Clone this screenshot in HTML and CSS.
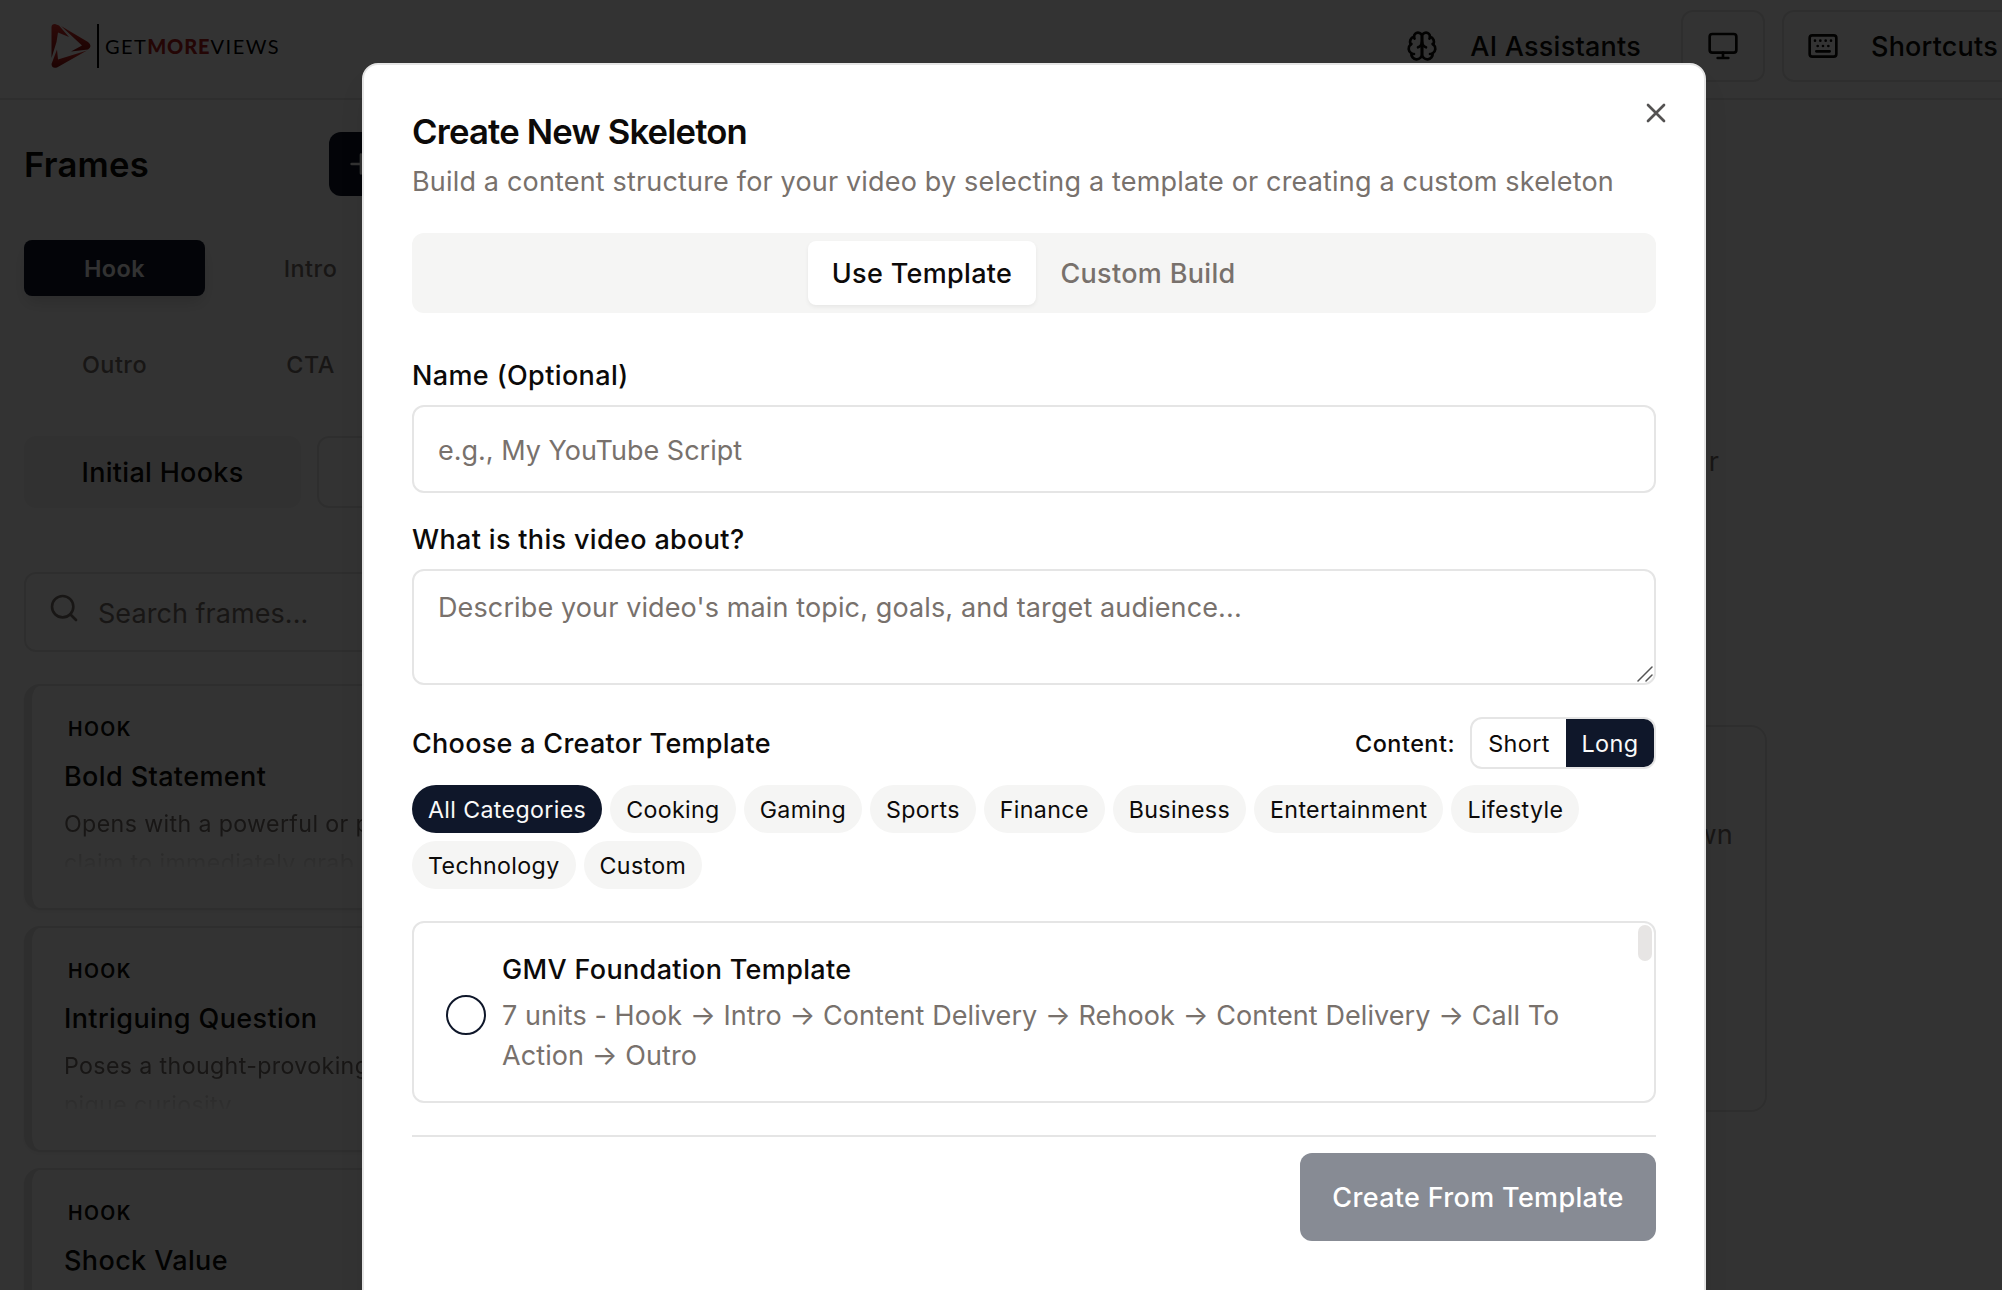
FILE: index.html
```html
<!DOCTYPE html>
<html lang="en">
<head>
<meta charset="utf-8">
<title>GetMoreViews</title>
<link rel="stylesheet" href="styles.css">
</head>
<body>
<div class="app">
  <header class="topbar">
    <div class="logo">
      <svg class="logo-mark" width="40" height="46" viewBox="0 0 40 46">
        <defs><linearGradient id="lg" x1="0" y1="0" x2="0" y2="1"><stop offset="0" stop-color="#e0352f"/><stop offset="1" stop-color="#8c0f0c"/></linearGradient></defs>
        <path fill="url(#lg)" d="M.5 35V4Q.5 1 4 1L8 2.500 18 14 7 9.500 5.500 19Z"/>
        <path fill="url(#lg)" d="M10 3 37 19Q42 23 37 26.500L20 28.500 31 22.500Z"/>
        <path fill="url(#lg)" d="M.5 41 6 26.500 7 36.500 36 27.500 6 44.500Q1 46 .5 41Z"/>
      </svg>
      <span class="logo-bar"></span>
      <span class="logo-text"><span class="logo-get">GET</span><b class="logo-more">MORE</b><span class="logo-views">VIEWS</span></span>
    </div>
    <nav class="actions">
      <button class="action action-ghost">
        <svg class="icon" viewBox="0 0 24 24"><path d="M12 5a3 3 0 1 0-5.997.125 4 4 0 0 0-2.526 5.770 4 4 0 0 0 .556 6.588A4 4 0 1 0 12 18Z"/><path d="M12 5a3 3 0 1 1 5.997.125 4 4 0 0 1 2.526 5.770 4 4 0 0 1-.556 6.588A4 4 0 1 1 12 18Z"/><path d="M15 13a4.500 4.500 0 0 1-3-4 4.500 4.500 0 0 1-3 4"/><path d="M17.599 6.500a3 3 0 0 0 .399-1.375"/><path d="M6.003 5.125A3 3 0 0 0 6.401 6.500"/><path d="M3.477 10.896a4 4 0 0 1 .585-.396"/><path d="M19.938 10.500a4 4 0 0 1 .585.396"/><path d="M6 18a4 4 0 0 1-1.967-.516"/><path d="M19.967 17.484A4 4 0 0 1 18 18"/></svg>
        <span class="label-ai">AI Assistants</span>
      </button>
      <button class="action action-square">
        <svg class="icon" viewBox="0 0 24 24"><rect width="20" height="14" x="2" y="3" rx="2"/><path d="M8 21h8M12 17v4"/></svg>
      </button>
      <button class="action action-keys">
        <svg class="icon" viewBox="0 0 24 24"><rect width="20" height="16" x="2" y="4" rx="2"/><path d="M10 8h.01M12 12h.01M14 8h.01M16 12h.01M18 8h.01M6 8h.01M7 16h10M8 12h.01"/></svg>
        <span class="label-keys">Shortcuts</span>
      </button>
    </nav>
  </header>
  <div class="workspace">
    <aside class="sidebar">
      <div class="side-head">
        <h2>Frames</h2>
        <button class="add"><svg class="icon" viewBox="0 0 24 24"><path d="M5 12h14M12 5v14"/></svg></button>
      </div>
      <div class="frame-tabs">
        <span class="frame-tab active">Hook</span><span class="frame-tab">Intro</span>
        <span class="frame-tab">Outro</span><span class="frame-tab">CTA</span>
      </div>
      <div class="groups"><span class="group selected">Initial Hooks</span><span class="group"></span></div>
      <div class="search">
        <svg class="icon" viewBox="0 0 24 24"><circle cx="11" cy="11" r="8"/><path d="m21 21-4.300-4.300"/></svg>
        <span>Search frames...</span>
      </div>
      <div class="cards">
        <article class="card"><div class="tag">HOOK</div><h3>Bold Statement</h3><p>Opens with a powerful or p<br>claim to immediately grab</p></article>
        <article class="card"><div class="tag">HOOK</div><h3>Intriguing Question</h3><p>Poses a thought-provoking<br>pique curiosity.</p></article>
        <article class="card"><div class="tag">HOOK</div><h3>Shock Value</h3></article>
      </div>
    </aside>
    <main class="canvas">
      <p class="lead">r</p>
      <section class="panel"><p>wn</p></section>
    </main>
  </div>
</div>
<div class="overlay"></div>
<div class="dialog" role="dialog">
  <svg class="icon close" viewBox="0 0 24 24"><path d="M18 6 6 18M6 6l12 12"/></svg>
  <h1>Create New Skeleton</h1>
  <p class="subtitle">Build a content structure for your video by selecting a template or creating a custom skeleton</p>
  <div class="tabs"><button class="tab on">Use Template</button><button class="tab">Custom Build</button></div>
  <label class="field-label">Name (Optional)</label>
  <input class="field" placeholder="e.g., My YouTube Script">
  <label class="field-label second">What is this video about?</label>
  <div class="area-wrap">
    <textarea class="field area" placeholder="Describe your video's main topic, goals, and target audience..."></textarea>
    <svg class="grip" width="16" height="16" viewBox="0 0 16 16"><path d="M1 15 15 1M9 15l6-6"/></svg>
  </div>
  <div class="choose">
    <span class="choose-title">Choose a Creator Template</span>
    <div class="length"><span class="length-label">Content:</span><div class="toggle"><button class="short">Short</button><button class="long">Long</button></div></div>
  </div>
  <div class="chips">
    <span class="chip on">All Categories</span><span class="chip">Cooking</span><span class="chip">Gaming</span><span class="chip">Sports</span><span class="chip">Finance</span><span class="chip">Business</span><span class="chip">Entertainment</span><span class="chip">Lifestyle</span><span class="chip">Technology</span><span class="chip">Custom</span>
  </div>
  <div class="templates">
    <span class="radio"></span>
    <div class="template">
      <div class="template-name">GMV Foundation Template</div>
      <div class="template-flow">7 units - Hook → Intro → Content Delivery → Rehook → Content Delivery → Call To<br>Action → Outro</div>
    </div>
    <span class="thumb"></span>
  </div>
  <div class="footer"><button class="create">Create From Template</button></div>
</div>
</body>
</html>
```
FILE: styles.css
```css
* { box-sizing: border-box; }
html, body { margin: 0; height: 1290px; overflow: hidden; }
body {
  position: relative;
  width: 2002px;
  background: #fff;
  color: #0c0a09;
  font-family: Inter, "Liberation Sans", sans-serif;
  font-size: 27px;
  letter-spacing: .2px;
}
h1, h2, h3, p { margin: 0; }
button { font: inherit; letter-spacing: inherit; color: inherit; border: 0; background: none; padding: 0; margin: 0; }
.icon { width: 32px; height: 32px; flex: none; fill: none; stroke: currentColor; stroke-width: 2; stroke-linecap: round; stroke-linejoin: round; }

/* top bar */
.app { height: 1290px; overflow: hidden; }
.topbar { display: flex; justify-content: space-between; height: 100px; border-bottom: 2px solid #e5e5e5; overflow: hidden; }
.logo { display: flex; align-items: center; height: 92px; padding-left: 51px; }
.logo-bar { width: 2px; height: 44px; margin: 0 6px; background: #000; }
.logo-text { display: flex; margin-top: -1px; font: 400 20px/24px Lato, sans-serif; color: #000; }
.logo-get { letter-spacing: 1.4px; }
.logo-more { letter-spacing: .9px; font-weight: 900; color: #b5201b; }
.logo-views { letter-spacing: 1.5px; }
.actions { display: flex; align-items: flex-start; padding-top: 10px; gap: 17px; margin-right: -24px; font-weight: 500; }
.action { display: flex; align-items: center; height: 72px; border: 2px solid #e5e5e5; border-radius: 12px; white-space: nowrap; }
.action-ghost { gap: 32px; padding: 0 21px 0 24px; border-color: transparent; letter-spacing: .24px; }
.action-square { width: 84px; justify-content: center; }
.action-keys { gap: 32px; width: 244px; padding-left: 23px; }

/* sidebar */
.workspace { display: flex; height: 1190px; }
.sidebar { width: 420px; flex: none; padding: 32px 0 0 24px; overflow: hidden; }
.side-head { display: flex; justify-content: space-between; align-items: center; height: 64px; }
h2 { font-size: 34.7px; font-weight: 600; letter-spacing: .2px; }
.add { display: flex; align-items: center; width: 91px; height: 64px; padding-left: 16px; border-radius: 12px; background: #0f172a; color: #fafaf9; }
.frame-tabs { display: grid; grid-template-columns: 181px 181px; grid-auto-rows: 56px; gap: 40px 15px; margin-top: 44px; }
.frame-tab { display: flex; align-items: center; justify-content: center; padding-top: 1px; border-radius: 8px; font-size: 23.4px; font-weight: 500; letter-spacing: .5px; color: #78716c; }
.frame-tab.active { background: #0f172a; color: #fafaf9; font-weight: 600; box-shadow: 0 8px 16px -2px rgba(0,0,0,.15); }
.groups { display: flex; gap: 16px; margin-top: 44px; }
.group { display: flex; align-items: center; justify-content: center; width: 277px; height: 72px; flex: none; border: 2px solid #e5e5e5; border-radius: 12px; font-weight: 500; letter-spacing: .3px; }
.group.selected { background: #f5f5f4; border-color: #f5f5f4; }
.search { display: flex; gap: 18px; height: 80px; margin-top: 64px; padding: 20px 0 0 22px; border: 2px solid #e5e5e5; border-radius: 12px; color: #78716c; line-height: 40px; letter-spacing: .05px; }
.search .icon { margin-top: -2px; }
.cards { display: flex; flex-direction: column; gap: 16px; margin-top: 32px; }
.card { height: 226px; padding: 30px 0 0 32px; border: 2px solid #e5e5e5; border-left-width: 8px; border-radius: 16px; white-space: nowrap; box-shadow: 0 2px 4px rgba(0,0,0,.05); }
.tag { padding-left: 4px; font-size: 19.5px; line-height: 26px; font-weight: 600; letter-spacing: 1.4px; }
h3 { margin-top: 15px; font-size: 27px; line-height: 40px; font-weight: 500; letter-spacing: .38px; }
.card p { height: 62px; margin-top: 8px; overflow: hidden; font-size: 23.2px; line-height: 39px; letter-spacing: .37px; color: #78716c; -webkit-mask-image: linear-gradient(#000 48%, rgba(0,0,0,.3) 78%, rgba(0,0,0,.1)); mask-image: linear-gradient(#000 48%, rgba(0,0,0,.3) 78%, rgba(0,0,0,.1)); }

/* canvas */
.canvas { flex: 1; display: flex; flex-direction: column; align-items: flex-start; padding: 342px 0 0; color: #78716c; font-size: 27px; line-height: 40px; }
.lead { width: 1299px; text-align: right; }
.panel { width: 1347px; height: 387px; margin-top: 243px; padding: 88px 32px 0 0; border: 2px solid #e5e5e5; border-radius: 16px; text-align: right; }

/* dialog */
.overlay { position: absolute; inset: 0; background: rgba(0,0,0,.8); }
.dialog { position: absolute; left: 362px; top: 63px; width: 1344px; height: 1290px; padding: 48px; border: 2px solid #e5e5e5; border-radius: 16px; background: #fff; box-shadow: 0 20px 30px -6px rgba(0,0,0,.1); }
.close { position: absolute; top: 32px; right: 32px; opacity: .7; }
h1 { font-size: 34.7px; line-height: 36px; font-weight: 600; letter-spacing: -.82px; }
.subtitle { margin-top: 13px; line-height: 40px; letter-spacing: .17px; color: #78716c; white-space: nowrap; }
.tabs { display: flex; justify-content: center; height: 80px; margin-top: 31px; padding: 8px; border-radius: 12px; background: #f5f5f4; }
.tab { width: 224px; border-radius: 8px; font-weight: 500; letter-spacing: .33px; color: #78716c; }
.tab.on { width: 228px; background: #fff; color: #0c0a09; box-shadow: 0 2px 4px rgba(0,0,0,.06); }
.field-label { display: block; margin: 49px 0 15px; line-height: 28px; font-weight: 500; letter-spacing: .38px; }
.field-label.second { margin-top: 33px; letter-spacing: .34px; }
.field { display: block; width: 100%; height: 88px; margin: 0; padding: 2px 24px 0; border: 2px solid #e5e5e5; border-radius: 12px; outline: 0; background: #fff; font: 400 27px/40px Inter, sans-serif; letter-spacing: 0; }
.field::placeholder { color: #78716c; opacity: 1; }
.area-wrap { position: relative; }
.area { height: 116px; padding: 17px 24px; resize: none; letter-spacing: .12px; overflow: hidden; }
.grip { position: absolute; right: 3px; bottom: 3px; fill: none; stroke: #555; stroke-width: 1.5; stroke-linecap: round; }
.choose { display: flex; justify-content: space-between; align-items: center; height: 52px; margin-top: 32px; }
.choose-title { font-weight: 500; letter-spacing: .28px; }
.length { display: flex; align-items: center; gap: 15px; font-size: 23.4px; }
.length-label { padding-top: 1px; font-weight: 500; letter-spacing: .5px; }
.toggle { display: flex; height: 52px; overflow: hidden; border: 2px solid #e5e5e5; border-radius: 12px; letter-spacing: .4px; }
.toggle button { padding-top: 1px; }
.short { width: 94px; }
.long { width: 88px; background: #0f172a; color: #fafaf9; }
.chips { display: flex; flex-wrap: wrap; gap: 8px; margin-top: 16px; }
.chip { height: 48px; padding: 1px 16px 0; border-radius: 24px; background: #f5f5f4; font-size: 23.2px; line-height: 48px; letter-spacing: .355px; }
.chip.on { background: #0f172a; color: #fafaf9; }
.templates { position: relative; display: flex; gap: 16px; height: 182px; margin-top: 32px; padding: 27px 32px 0; border: 2px solid #e5e5e5; border-radius: 12px; }
.radio { width: 40px; height: 40px; margin-top: 45px; border: 2px solid #0f172a; border-radius: 50%; flex: none; }
.template { white-space: nowrap; line-height: 40px; }
.template-name { font-weight: 500; letter-spacing: .34px; }
.template-flow { margin-top: 6px; letter-spacing: .085px; color: #78716c; }
.thumb { position: absolute; top: 2px; right: 2px; width: 14px; height: 36px; border-radius: 7px; background: #e7e5e4; }
.footer { display: flex; justify-content: flex-end; margin-top: 32px; padding-top: 16px; border-top: 2px solid #e5e5e5; }
.create { width: 356px; height: 88px; border-radius: 12px; background: #878b94; color: #fff; font-weight: 500; letter-spacing: .33px; }
```
